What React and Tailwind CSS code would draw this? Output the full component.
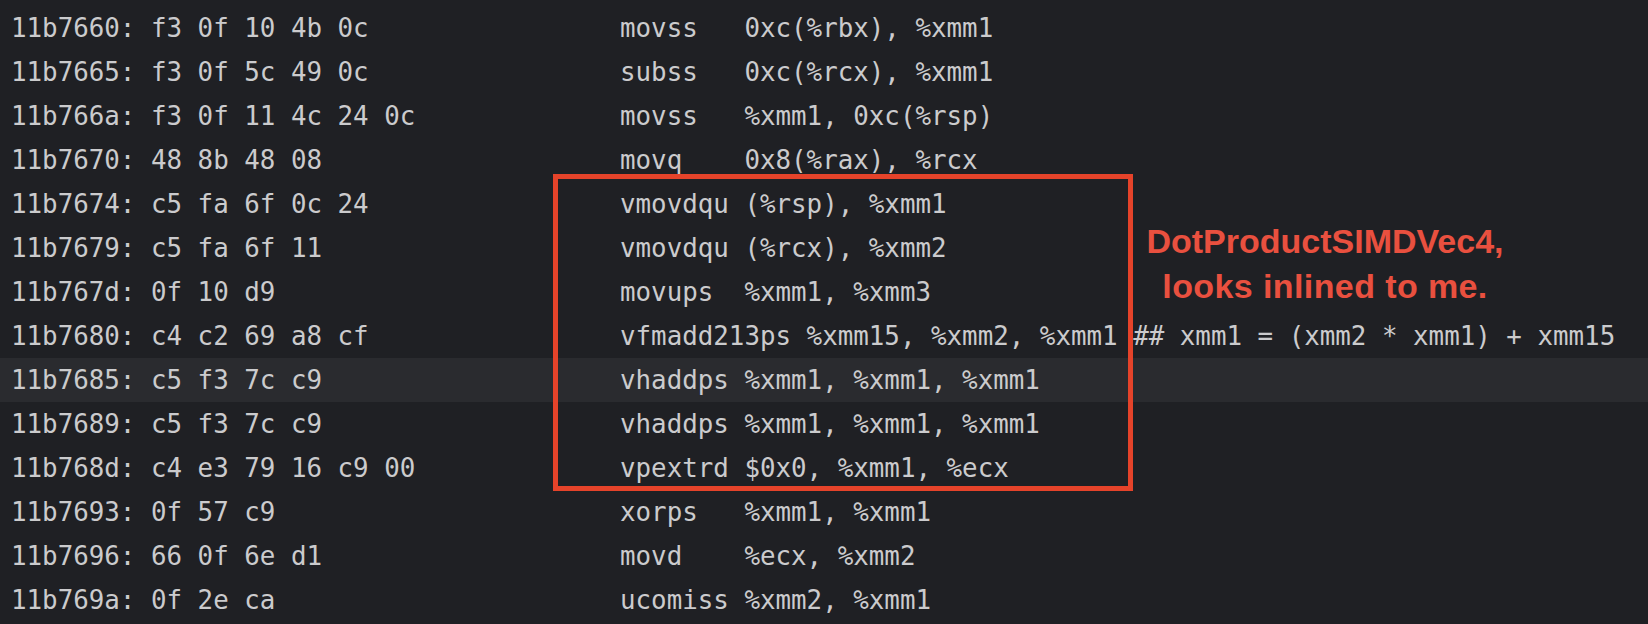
import React from "react";

const rows = [
  ["11b7660: f3 0f 10 4b 0c", "movss   0xc(%rbx), %xmm1"],
  ["11b7665: f3 0f 5c 49 0c", "subss   0xc(%rcx), %xmm1"],
  ["11b766a: f3 0f 11 4c 24 0c", "movss   %xmm1, 0xc(%rsp)"],
  ["11b7670: 48 8b 48 08", "movq    0x8(%rax), %rcx"],
  ["11b7674: c5 fa 6f 0c 24", "vmovdqu (%rsp), %xmm1"],
  ["11b7679: c5 fa 6f 11", "vmovdqu (%rcx), %xmm2"],
  ["11b767d: 0f 10 d9", "movups  %xmm1, %xmm3"],
  ["11b7680: c4 c2 69 a8 cf", "vfmadd213ps %xmm15, %xmm2, %xmm1 ## xmm1 = (xmm2 * xmm1) + xmm15"],
  ["11b7685: c5 f3 7c c9", "vhaddps %xmm1, %xmm1, %xmm1", true],
  ["11b7689: c5 f3 7c c9", "vhaddps %xmm1, %xmm1, %xmm1"],
  ["11b768d: c4 e3 79 16 c9 00", "vpextrd $0x0, %xmm1, %ecx"],
  ["11b7693: 0f 57 c9", "xorps   %xmm1, %xmm1"],
  ["11b7696: 66 0f 6e d1", "movd    %ecx, %xmm2"],
  ["11b769a: 0f 2e ca", "ucomiss %xmm2, %xmm1"],
];

export default function App() {
  return (
    <div className="relative w-full h-[624px] overflow-hidden bg-[#1f2024]">
      <div
        className="flex flex-col pt-[6px] text-[25.83px] text-[#cbcbcd] whitespace-pre"
        style={{ fontFamily: '"DejaVu Sans Mono", monospace' }}
      >
        {rows.map(([addr, ins, hl], i) => (
          <div
            key={i}
            className={
              "flex items-center h-[44px] leading-[44px] " +
              (hl ? "bg-[#2a2b2f]" : "")
            }
          >
            <span className="w-[620px] shrink-0 pl-[11px]">{addr}</span>
            <span>{ins}</span>
          </div>
        ))}
      </div>

      <div className="absolute left-[553px] top-[174px] w-[580px] h-[317px] border-[5px] border-[#e5432a]" />

      <div
        className="absolute left-[1125px] top-[219px] w-[400px] text-center font-bold text-[34px] leading-[45px] text-[#e9503f]"
        style={{ fontFamily: '"Liberation Sans", Arial, sans-serif' }}
      >
        <div>DotProductSIMDVec4,</div>
        <div className="tracking-[0.4px]">looks inlined to me.</div>
      </div>
    </div>
  );
}
